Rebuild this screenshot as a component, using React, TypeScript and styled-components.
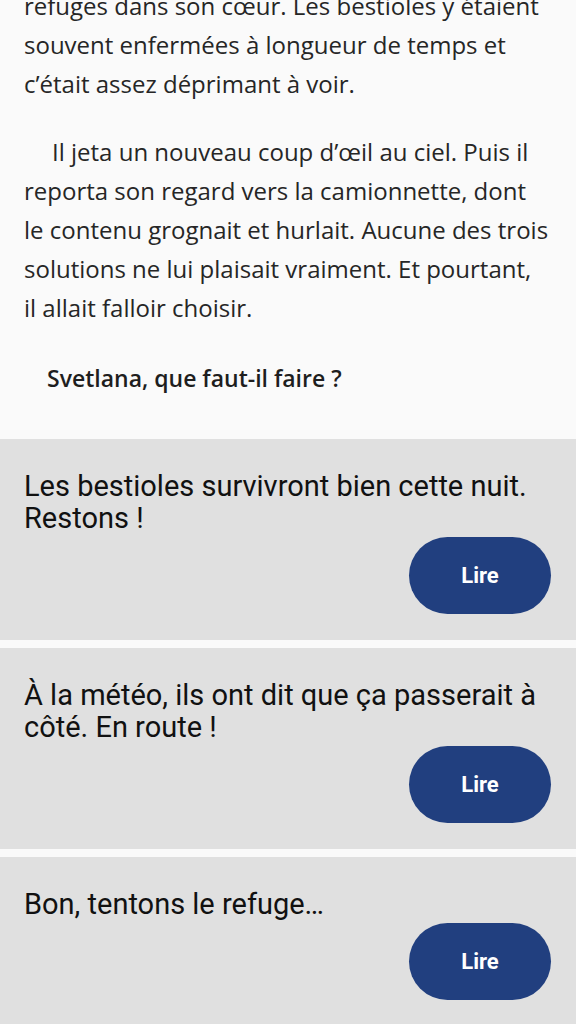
import React from "react";
import styled, { createGlobalStyle } from "styled-components";

const GlobalStyle = createGlobalStyle`
  html, body {
    margin: 0;
    padding: 0;
    background: #fafafa;
  }
  body {
    overflow: hidden;
  }
`;

const Page = styled.div`
  width: 576px;
  min-height: 1024px;
  background: #fafafa;
  overflow: hidden;
`;

// the page is scrolled: the first line sits partly above the viewport
const Story = styled.section`
  margin-top: -14px;
  padding: 0 24px 41px 24px;
  font-family: "Open Sans", "Liberation Sans", sans-serif;
  font-size: 24px;
  line-height: 39px;
  color: #262626;
`;

const Paragraph = styled.p<{ $indent?: boolean }>`
  margin: 0 0 29px 0;
  text-indent: ${(p) => (p.$indent ? "28px" : "0")};
`;

const Question = styled.p`
  margin: 32px 0 0 0;
  padding-left: 23px;
  font-weight: 600;
  font-size: 23px;
  color: #1e1e1e;
`;

const Choices = styled.div`
  display: flex;
  flex-direction: column;
  gap: 8px;
`;

const Choice = styled.div`
  background: #e0e0e0;
  padding: 31px 25px 26px 24px;
  display: flex;
  flex-direction: column;
`;

const ChoiceText = styled.div`
  font-family: Roboto, "Liberation Sans", sans-serif;
  font-size: 29px;
  line-height: 32px;
  color: #111111;
`;

const ReadButton = styled.button`
  align-self: flex-end;
  margin-top: 3px;
  width: 142px;
  height: 77px;
  border: none;
  border-radius: 39px;
  background: #213f7f;
  color: #ffffff;
  font-family: Roboto, "Liberation Sans", sans-serif;
  font-weight: 700;
  font-size: 22px;
  cursor: pointer;
`;

const choices = [
  "Les bestioles survivront bien cette nuit. Restons !",
  "À la météo, ils ont dit que ça passerait à côté. En route !",
  "Bon, tentons le refuge…",
];

export default function App() {
  return (
    <Page>
      <GlobalStyle />
      <Story>
        <Paragraph>
          refuges dans son cœur. Les bestioles y étaient souvent enfermées à
          longueur de temps et c’était assez déprimant à voir.
        </Paragraph>
        <Paragraph $indent>
          Il jeta un nouveau coup d’œil au ciel. Puis il
          <br />
          reporta son regard vers la camionnette, dont
          <br />
          le contenu grognait et hurlait. Aucune des trois
          <br />
          solutions ne lui plaisait vraiment. Et pourtant,
          <br />
          il allait falloir choisir.
        </Paragraph>
        <Question>Svetlana, que faut-il faire ?</Question>
      </Story>
      <Choices>
        {choices.map((text, idx) => (
          <Choice key={idx}>
            <ChoiceText>{text}</ChoiceText>
            <ReadButton>Lire</ReadButton>
          </Choice>
        ))}
      </Choices>
    </Page>
  );
}
